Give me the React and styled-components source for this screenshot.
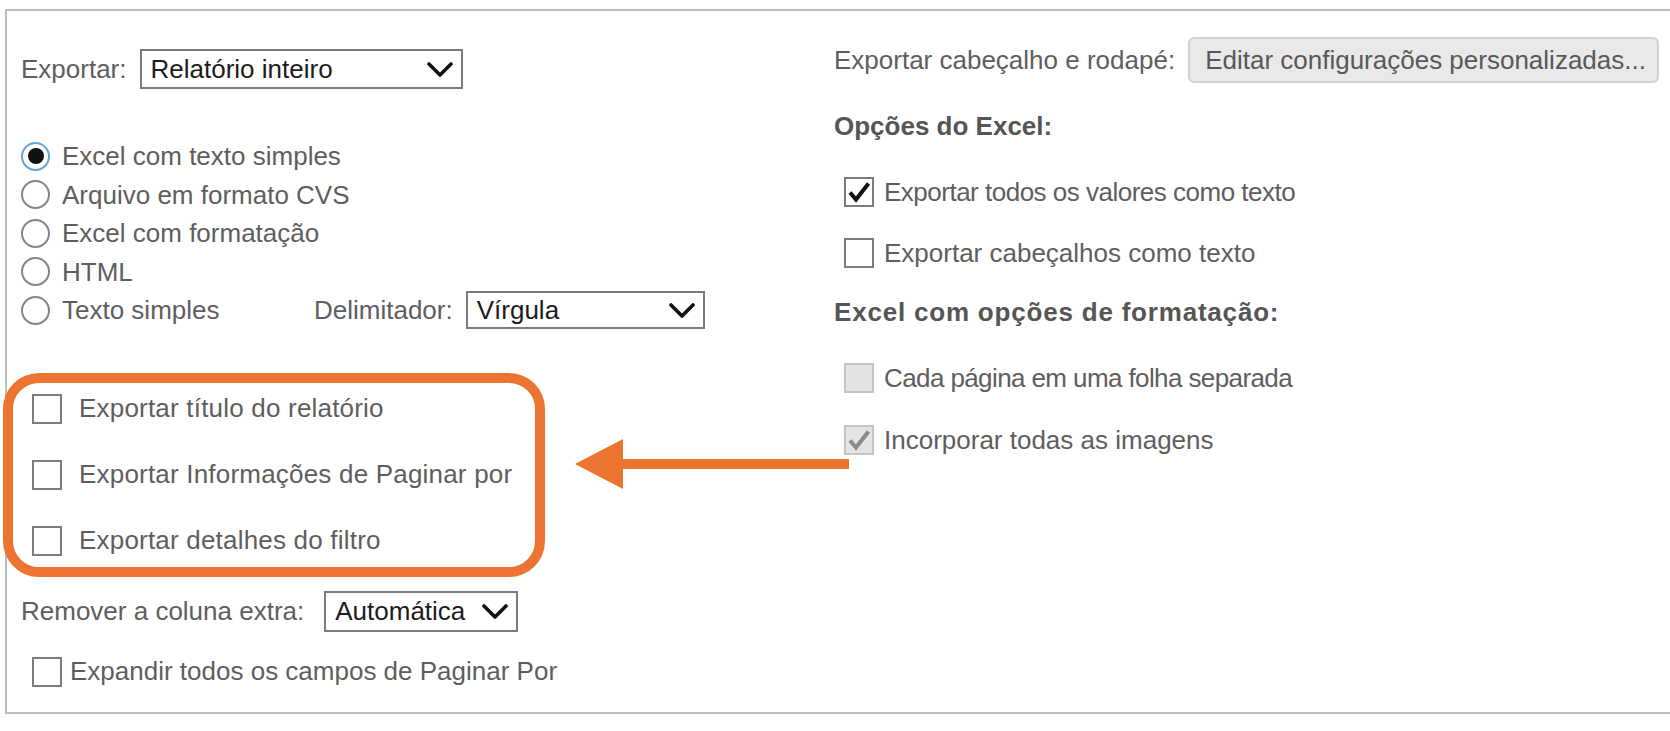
import React from "react";
import styled, { createGlobalStyle } from "styled-components";

const GlobalStyle = createGlobalStyle`
  html, body {
    margin: 0;
    padding: 0;
    background: #fff;
    overflow: hidden;
  }
  body {
    font-family: "Liberation Sans", Arial, sans-serif;
    font-size: 26px;
    color: #5e5e5e;
  }
`;

const ORANGE = "#ed7331";

const Panel = styled.div`
  position: relative;
  box-sizing: border-box;
  margin: 9px 0 0 5px;
  height: 705px;
  border: 2px solid #bdbdbd;
  border-right: none;
  display: flex;
`;

const LeftColumn = styled.div`
  width: 827px;
  padding-left: 14px;
  box-sizing: border-box;
  display: flex;
  flex-direction: column;
`;

const RightColumn = styled.div`
  display: flex;
  flex-direction: column;
`;

const FieldRow = styled.div`
  display: flex;
  align-items: center;
  gap: ${(p) => p.$gap || 13}px;
  height: ${(p) => p.$height || 40}px;
  margin-top: ${(p) => p.$top || 0}px;
`;

const Label = styled.span`
  line-height: 30px;
  white-space: nowrap;
`;

const SelectBox = styled.div`
  box-sizing: border-box;
  width: ${(p) => p.$width}px;
  height: ${(p) => p.$height || 40}px;
  border: 2px solid #7b7b7b;
  background: #fff;
  color: #1c1c1c;
  display: flex;
  align-items: center;
  justify-content: space-between;
  padding: 0 8px 0 9px;
  white-space: nowrap;
`;

const RadioList = styled.div`
  margin-top: 48px;
  display: flex;
  flex-direction: column;
`;

const RadioRow = styled.div`
  display: flex;
  align-items: center;
  height: 38.5px;
`;

const RadioCircle = styled.span`
  box-sizing: border-box;
  width: 29px;
  height: 29px;
  border-radius: 50%;
  border: 2px solid ${(p) => (p.$checked ? "#5ea6dc" : "#858585")};
  background: #fff;
  display: flex;
  align-items: center;
  justify-content: center;
  margin-right: 12px;
  flex-shrink: 0;

  &::after {
    content: "";
    display: ${(p) => (p.$checked ? "block" : "none")};
    width: 16px;
    height: 16px;
    border-radius: 50%;
    background: #111;
  }
`;

const RadioLabel = styled.span`
  width: ${(p) => (p.$width ? `${p.$width}px` : "auto")};
  white-space: nowrap;
  line-height: 30px;
`;

const Highlight = styled.div`
  box-sizing: border-box;
  margin: 43px 0 0 -18px;
  width: 542px;
  border: 10px solid ${ORANGE};
  border-radius: 36px;
  display: flex;
  flex-direction: column;
  gap: 14px;
  padding: 0 0 0 19px;
`;

const CheckRow = styled.label`
  display: flex;
  align-items: center;
  height: ${(p) => p.$height || 30}px;
  gap: ${(p) => p.$gap || 10}px;
  margin-top: ${(p) => p.$top || 0}px;
  margin-left: ${(p) => p.$left || 0}px;
  letter-spacing: ${(p) => p.$spacing || 0}px;
  white-space: nowrap;
`;

const Box = styled.span`
  box-sizing: border-box;
  width: 30px;
  height: 30px;
  flex-shrink: 0;
  border: 2px solid ${(p) => (p.$disabled ? "#c4c4c4" : "#7d7d7d")};
  background: ${(p) => (p.$disabled ? "#e4e4e4" : "#fff")};
  display: flex;
  align-items: center;
  justify-content: center;
`;

const Heading = styled.div`
  font-weight: 700;
  color: #555;
  line-height: 30px;
  margin-top: ${(p) => p.$top}px;
  letter-spacing: ${(p) => p.$spacing || 0}px;
  white-space: nowrap;
`;

const Button = styled.button`
  box-sizing: border-box;
  width: 471px;
  height: 46px;
  padding: 0 15px;
  border: 2px solid #d2d2d2;
  border-radius: 6px;
  background: #e9e9e9;
  color: #585858;
  font-family: inherit;
  font-size: 26px;
  text-align: left;
  white-space: nowrap;
`;

const ArrowLayer = styled.svg`
  position: absolute;
  left: 568px;
  top: 424px;
  overflow: visible;
`;

function Chevron() {
  return (
    <svg width="26" height="17" viewBox="0 0 26 17">
      <polyline
        points="2,3 13,14 24,3"
        fill="none"
        stroke="#111"
        strokeWidth="3.6"
        strokeLinecap="round"
        strokeLinejoin="round"
      />
    </svg>
  );
}

function Tick({ color }) {
  return (
    <svg width="24" height="24" viewBox="0 0 24 24">
      <path
        d="M3 12.5 L9 19.5 L21.5 3.5"
        fill="none"
        stroke={color}
        strokeWidth="4"
        strokeLinejoin="miter"
      />
    </svg>
  );
}

function Checkbox({ checked, disabled }) {
  return (
    <Box $disabled={disabled}>
      {checked && <Tick color={disabled ? "#8a8a8a" : "#111"} />}
    </Box>
  );
}

function Select({ value, width, height }) {
  return (
    <SelectBox $width={width} $height={height}>
      <span>{value}</span>
      <Chevron />
    </SelectBox>
  );
}

const formats = [
  { label: "Excel com texto simples", checked: true },
  { label: "Arquivo em formato CVS" },
  { label: "Excel com formatação" },
  { label: "HTML" },
];

const extras = [
  "Exportar título do relatório",
  "Exportar Informações de Paginar por",
  "Exportar detalhes do filtro",
];

export default function App() {
  return (
    <>
      <GlobalStyle />
      <Panel>
        <LeftColumn>
          <FieldRow $top={38}>
            <Label>Exportar:</Label>
            <Select value="Relatório inteiro" width={323} />
          </FieldRow>

          <RadioList>
            {formats.map((f) => (
              <RadioRow key={f.label}>
                <RadioCircle $checked={f.checked} />
                <RadioLabel>{f.label}</RadioLabel>
              </RadioRow>
            ))}
            <RadioRow>
              <RadioCircle />
              <RadioLabel $width={252}>Texto simples</RadioLabel>
              <FieldRow $height={38}>
                <Label>Delimitador:</Label>
                <Select value="Vírgula" width={239} height={38} />
              </FieldRow>
            </RadioRow>
          </RadioList>

          <Highlight>
            {extras.map((text) => (
              <CheckRow key={text} $height={52} $gap={17} $spacing={0.2}>
                <Checkbox />
                <span>{text}</span>
              </CheckRow>
            ))}
          </Highlight>

          <FieldRow $top={14} $height={41} $gap={20}>
            <Label>Remover a coluna extra:</Label>
            <Select value="Automática" width={194} height={41} />
          </FieldRow>

          <CheckRow $top={25} $left={11} $gap={8}>
            <Checkbox />
            <span>Expandir todos os campos de Paginar Por</span>
          </CheckRow>
        </LeftColumn>

        <RightColumn>
          <FieldRow $top={26} $height={46}>
            <Label>Exportar cabeçalho e rodapé:</Label>
            <Button>Editar configurações personalizadas...</Button>
          </FieldRow>

          <Heading $top={28}>Opções do Excel:</Heading>

          <CheckRow $top={36} $left={10} $spacing={-0.5}>
            <Checkbox checked />
            <span>Exportar todos os valores como texto</span>
          </CheckRow>
          <CheckRow $top={31} $left={10}>
            <Checkbox />
            <span>Exportar cabeçalhos como texto</span>
          </CheckRow>

          <Heading $top={29} $spacing={0.8}>
            Excel com opções de formatação:
          </Heading>

          <CheckRow $top={36} $left={10} $spacing={-0.6}>
            <Checkbox disabled />
            <span>Cada página em uma folha separada</span>
          </CheckRow>
          <CheckRow $top={32} $left={10}>
            <Checkbox checked disabled />
            <span>Incorporar todas as imagens</span>
          </CheckRow>
        </RightColumn>

        <ArrowLayer width="274" height="57" viewBox="0 0 274 57">
          <polygon points="0,29 48,4 48,54" fill={ORANGE} />
          <rect x="44" y="24" width="230" height="10" fill={ORANGE} />
        </ArrowLayer>
      </Panel>
    </>
  );
}
